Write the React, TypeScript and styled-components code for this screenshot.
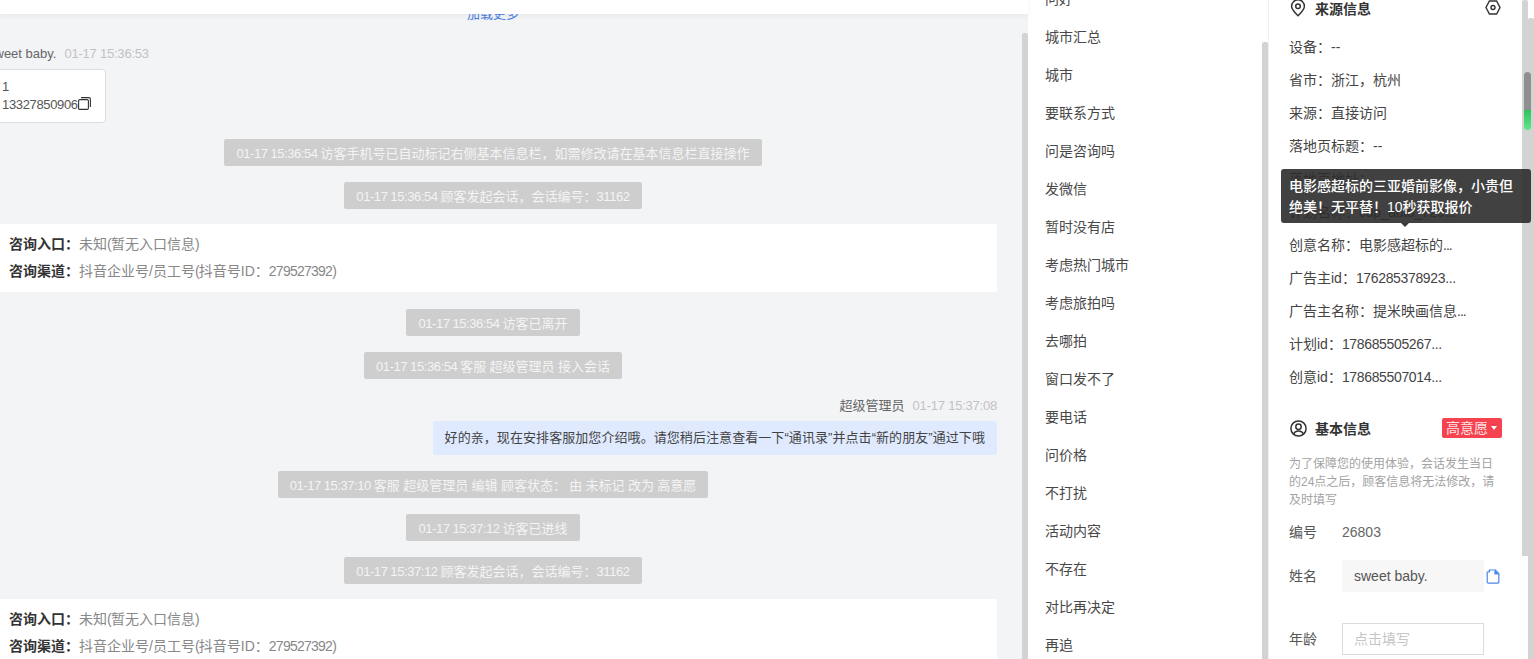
import React from "react";
import styled, { createGlobalStyle } from "styled-components";

const GlobalStyle = createGlobalStyle`
  html, body {
    margin: 0;
    padding: 0;
    background: #fff;
    overflow: hidden;
  }
  body {
    font-family: "Liberation Sans", "Noto Sans CJK SC", sans-serif;
    font-size: 14px;
    color: #444;
  }
`;

const Page = styled.div`
  position: relative;
  display: flex;
  width: 1534px;
  height: 659px;
  overflow: hidden;
  background: #fff;
`;

const ScrollThumb = styled.div<{ $top: number; $height?: number }>`
  flex: none;
  width: 6px;
  margin-top: ${(p) => p.$top}px;
  height: ${(p) => (p.$height ? `${p.$height}px` : "auto")};
  background: #d3d3d3;
  border-radius: 2px 2px 0 0;
`;

// latin runs in the reference are narrower than Liberation at the same size
const Tight = styled.span<{ $s: number }>`
  letter-spacing: ${(p) => p.$s}px;
`;

/* chat */
const ChatPane = styled.div`
  flex: none;
  width: 1028px;
  display: flex;
  flex-direction: column;
  background: #f3f4f6;
`;
const TopBar = styled.div`
  flex: none;
  height: 14px;
  background: #fff;
  box-shadow: 0 2px 6px rgba(0, 0, 0, 0.05);
  position: relative;
  z-index: 1;
`;
const ChatBody = styled.div`
  flex: 1;
  display: flex;
  min-height: 0;
`;
const ChatScroll = styled.div`
  flex: 1;
  overflow: hidden;
`;
const ChatContent = styled.div`
  width: 1008px;
  margin: -9px 0 0 -11px;
  display: flex;
  flex-direction: column;
  align-items: center;
`;
const LoadMore = styled.div`
  font-size: 13px;
  line-height: 18px;
  color: #4a7fe0;
  margin-bottom: 21px;
`;
const Incoming = styled.div`
  align-self: stretch;
  margin: 0 0 16px -1px;
`;
const Meta = styled.div<{ $right?: boolean }>`
  display: flex;
  gap: 8px;
  font-size: 13px;
  line-height: ${(p) => (p.$right ? 22 : 20)}px;
  color: #666;
  justify-content: ${(p) => (p.$right ? "flex-end" : "flex-start")};
`;
const Time = styled.span`
  color: #c2c2c2;
  letter-spacing: -0.22px;
`;
const ContactCard = styled.div`
  display: inline-block;
  margin: 5px 0 0 6px;
  padding: 8px 14px 8px 7px;
  background: #fff;
  border: 1px solid #dcdcdc;
  border-radius: 4px;
  font-size: 13px;
  line-height: 18px;
  color: #555;
`;
const CardPhone = styled.div`
  display: flex;
  align-items: center;
  letter-spacing: -0.35px;
`;
const CopySvg = styled.svg`
  margin-top: -3px;
`;
const SystemNote = styled.div`
  height: 27px;
  line-height: 29px;
  padding: 0 12px;
  margin-bottom: 16px;
  background: #cecece;
  border-radius: 2px;
  font-size: 13px;
  word-spacing: -0.25px;
  color: #f4f4f4;
  white-space: nowrap;
  overflow: hidden;
`;
const EntryCard = styled.div`
  align-self: stretch;
  box-sizing: border-box;
  height: 68px;
  margin: -1px 0 17px;
  padding: 7px 20px;
  background: #fff;
`;
const EntryRow = styled.div`
  line-height: 27px;
  white-space: nowrap;
  color: #888;
`;
const EntryLabel = styled.b`
  color: #333;
`;
const Outgoing = styled.div`
  align-self: stretch;
  display: flex;
  flex-direction: column;
  align-items: flex-end;
  gap: 4px;
  margin-bottom: 16px;
`;
const Bubble = styled.div`
  height: 34px;
  line-height: 34px;
  padding: 0 12px;
  background: #dfeaff;
  border-radius: 3px;
  font-size: 13px;
  letter-spacing: 0.07px;
  color: #444;
  white-space: nowrap;
`;

/* quick replies */
const ReplyPane = styled.div`
  flex: none;
  width: 240px;
  display: flex;
  background: #fff;
`;
const ReplyList = styled.div`
  flex: 1;
  overflow: hidden;
`;
const ReplyItem = styled.div`
  height: 38px;
  line-height: 38px;
  padding-left: 17px;
  color: #484848;
  &:first-child {
    margin-top: -20px;
  }
`;

/* info */
const InfoPane = styled.div`
  flex: none;
  width: 266px;
  display: flex;
  border-left: 1px solid #efefef;
  box-sizing: border-box;
`;
const InfoPanel = styled.div`
  flex: 1;
  min-width: 0;
  padding: 0 20px;
  overflow: hidden;
`;
const SectionHead = styled.div`
  display: flex;
  align-items: center;
  height: 20px;
  color: #333;
  font-weight: 700;
`;
const SourceHead = styled(SectionHead)`
  margin-top: -2px;
  margin-bottom: 13px;
`;
const BasicHead = styled(SectionHead)`
  margin-top: 24px;
`;
const HeadIcon = styled.span`
  display: flex;
  width: 18px;
  justify-content: center;
  margin-right: 8px;
  color: #333;
`;
const HeadTail = styled.span`
  margin-left: auto;
  display: flex;
`;
const SettingsSlot = styled(HeadTail)`
  margin-right: 1px;
  margin-top: -2px;
`;
const InfoRow = styled.div`
  height: 33px;
  line-height: 33px;
  color: #444;
  white-space: nowrap;
`;
const LevelTag = styled.span`
  display: flex;
  align-items: center;
  gap: 3px;
  height: 20px;
  padding: 0 5px 0 4px;
  background: #f5424f;
  border-radius: 2px;
  color: #fde3e3;
  font-weight: 400;
  line-height: 20px;
`;
const Caret = styled.i`
  width: 0;
  height: 0;
  border: 3px solid transparent;
  border-top: 4px solid #fff;
  border-bottom: 0;
`;
const Notice = styled.p`
  margin: 17px 0 13px;
  font-size: 12px;
  line-height: 18px;
  color: #a3a3a3;
`;
const Field = styled.div<{ $gap?: number }>`
  display: flex;
  align-items: center;
  line-height: 20px;
  margin-top: ${(p) => p.$gap ?? 0}px;
`;
const FieldLabel = styled.span`
  flex: none;
  width: 53px;
  color: #555;
`;
const FieldValue = styled.span`
  color: #666;
`;
const FilledInput = styled.div`
  box-sizing: border-box;
  flex: none;
  width: 142px;
  height: 32px;
  line-height: 32px;
  padding-left: 12px;
  background: #f7f7f7;
  color: #555;
`;
const EmptyInput = styled(FilledInput)`
  background: #fff;
  border: 1px solid #dcdcdc;
  line-height: 30px;
  padding-left: 11px;
  color: #c6c6c6;
`;
const CopySlot = styled.span`
  display: flex;
  margin-left: 2px;
  color: #4a86e8;
`;

/* overlays */
const MiniThumb = styled.div`
  position: absolute;
  left: 1524px;
  top: 72px;
  width: 7px;
  height: 58px;
  border-radius: 4px;
  background: linear-gradient(
    #8f8f8f 0,
    #8f8f8f 65%,
    #2fc25b 66%,
    #62e58c 100%
  );
`;
const Tooltip = styled.div`
  position: absolute;
  left: 1281px;
  top: 169px;
  box-sizing: border-box;
  width: 250px;
  height: 54px;
  padding: 7px 8px 0;
  border-radius: 3px;
  background: rgba(44, 44, 44, 0.9);
  color: #fff;
  font-weight: 500;
  line-height: 21px;
  &::after {
    content: "";
    position: absolute;
    left: 120px;
    bottom: -4px;
    border: 4px solid transparent;
    border-top: 4px solid #3a3a3a;
    border-bottom: 0;
  }
`;

const replies = [
  "问好",
  "城市汇总",
  "城市",
  "要联系方式",
  "问是咨询吗",
  "发微信",
  "暂时没有店",
  "考虑热门城市",
  "考虑旅拍吗",
  "去哪拍",
  "窗口发不了",
  "要电话",
  "问价格",
  "不打扰",
  "活动内容",
  "不存在",
  "对比再决定",
  "再追",
];

const sourceRows: { text: string; tail?: string; s?: number }[] = [
  { text: "设备：--" },
  { text: "省市：浙江，杭州" },
  { text: "来源：直接访问" },
  { text: "落地页标题：--" },
  { text: "落地页地址：" },
  { text: "计划名称：", tail: "cdp_auto_729...", s: -0.3 },
  { text: "创意名称：电影感超标的", tail: "...", s: -1 },
  { text: "广告主id：", tail: "176285378923...", s: -0.35 },
  { text: "广告主名称：提米映画信息", tail: "...", s: -1 },
  { text: "计划id：", tail: "178685505267...", s: -0.35 },
  { text: "创意id：", tail: "178685507014...", s: -0.35 },
];

function PinIcon() {
  return (
    <svg width="16" height="18" viewBox="0 0 16 18" fill="none" stroke="currentColor" strokeWidth="1.5">
      <path d="M8 16.8C5 13.8 1.6 10.6 1.6 7.2a6.4 6.4 0 0 1 12.8 0c0 3.4-3.4 6.6-6.4 9.6z" />
      <circle cx="8" cy="7.2" r="2.3" />
    </svg>
  );
}

function HexIcon() {
  return (
    <svg width="16" height="15" viewBox="0 0 16 15" fill="none" stroke="#333" strokeWidth="1.4">
      <path d="M4.4 1h7.2L15 7.5 11.6 14H4.4L1 7.5z" />
      <circle cx="8" cy="7.5" r="2" />
    </svg>
  );
}

function UserIcon() {
  return (
    <svg width="17" height="17" viewBox="0 0 17 17" fill="none" stroke="currentColor" strokeWidth="1.5">
      <circle cx="8.5" cy="8.5" r="7.6" />
      <circle cx="8.5" cy="6.8" r="2.7" />
      <path d="M3.6 14.2c.8-2.2 2.7-3.2 4.9-3.2s4.1 1 4.9 3.2" />
    </svg>
  );
}

function CopyIcon() {
  return (
    <CopySvg width="13" height="13" viewBox="0 0 13 13" fill="none" stroke="#333" strokeWidth="1.1">
      <rect x="0.6" y="2.6" width="9.8" height="9.8" rx="1.2" />
      <path d="M3 .6h8a1.4 1.4 0 0 1 1.4 1.4v8" />
    </CopySvg>
  );
}

function DocIcon() {
  return (
    <svg width="14" height="15" viewBox="0 0 14 15" fill="none" stroke="currentColor" strokeWidth="1.2">
      <path d="M1.2 3h2.2V1h6l3.4 3.4V13a1.2 1.2 0 0 1-1.2 1.2H2.4A1.2 1.2 0 0 1 1.2 13z" />
      <path d="M3.4 1v2M9 1.2v3.6h3.6" fill="currentColor" />
    </svg>
  );
}

function Stamp({ value }: { value: string }) {
  return <Tight $s={-0.43}>{value} </Tight>;
}

function EntryInfo() {
  return (
    <EntryCard>
      <EntryRow>
        <EntryLabel>咨询入口：</EntryLabel>未知<Tight $s={-0.75}>(</Tight>暂无入口信息<Tight $s={-0.75}>)</Tight>
      </EntryRow>
      <EntryRow>
        <EntryLabel>咨询渠道：</EntryLabel>抖音企业号/员工号<Tight $s={-0.75}>(</Tight>抖音号ID：
        <Tight $s={-0.75}>279527392)</Tight>
      </EntryRow>
    </EntryCard>
  );
}

export default function App() {
  return (
    <Page>
      <GlobalStyle />
      <ChatPane>
        <TopBar />
        <ChatBody>
          <ChatScroll>
            <ChatContent>
              <LoadMore>加载更多</LoadMore>
              <Incoming>
                <Meta>
                  <span>sweet baby.</span>
                  <Time>01-17 15:36:53</Time>
                </Meta>
                <ContactCard>
                  <div>1</div>
                  <CardPhone>
                    13327850906
                    <CopyIcon />
                  </CardPhone>
                </ContactCard>
              </Incoming>
              <SystemNote>
                <Stamp value="01-17 15:36:54" />
                访客手机号已自动标记右侧基本信息栏，如需修改请在基本信息栏直接操作
              </SystemNote>
              <SystemNote>
                <Stamp value="01-17 15:36:54" />
                顾客发起会话，会话编号：<Tight $s={-0.4}>31162</Tight>
              </SystemNote>
              <EntryInfo />
              <SystemNote>
                <Stamp value="01-17 15:36:54" />
                访客已离开
              </SystemNote>
              <SystemNote>
                <Stamp value="01-17 15:36:54" />
                客服 超级管理员 接入会话
              </SystemNote>
              <Outgoing>
                <Meta $right>
                  <span>超级管理员</span>
                  <Time>01-17 15:37:08</Time>
                </Meta>
                <Bubble>好的亲，现在安排客服加您介绍哦。请您稍后注意查看一下“通讯录”并点击“新的朋友”通过下哦</Bubble>
              </Outgoing>
              <SystemNote>
                <Stamp value="01-17 15:37:10" />
                客服 超级管理员 编辑 顾客状态： 由 未标记 改为 高意愿
              </SystemNote>
              <SystemNote>
                <Stamp value="01-17 15:37:12" />
                访客已进线
              </SystemNote>
              <SystemNote>
                <Stamp value="01-17 15:37:12" />
                顾客发起会话，会话编号：<Tight $s={-0.4}>31162</Tight>
              </SystemNote>
              <EntryInfo />
            </ChatContent>
          </ChatScroll>
          <ScrollThumb $top={19} />
        </ChatBody>
      </ChatPane>

      <ReplyPane>
        <ReplyList>
          {replies.map((r) => (
            <ReplyItem key={r}>{r}</ReplyItem>
          ))}
        </ReplyList>
        <ScrollThumb $top={42} />
      </ReplyPane>

      <InfoPane>
        <InfoPanel>
          <SourceHead>
            <HeadIcon>
              <PinIcon />
            </HeadIcon>
            来源信息
            <SettingsSlot>
              <HexIcon />
            </SettingsSlot>
          </SourceHead>
          {sourceRows.map((r) => (
            <InfoRow key={r.text + r.tail}>
              {r.text}
              {r.tail && <Tight $s={r.s ?? 0}>{r.tail}</Tight>}
            </InfoRow>
          ))}
          <BasicHead>
            <HeadIcon>
              <UserIcon />
            </HeadIcon>
            基本信息
            <HeadTail>
              <LevelTag>
                高意愿
                <Caret />
              </LevelTag>
            </HeadTail>
          </BasicHead>
          <Notice>为了保障您的使用体验，会话发生当日的24点之后，顾客信息将无法修改，请及时填写</Notice>
          <Field>
            <FieldLabel>编号</FieldLabel>
            <FieldValue>26803</FieldValue>
          </Field>
          <Field $gap={18}>
            <FieldLabel>姓名</FieldLabel>
            <FilledInput>sweet baby.</FilledInput>
            <CopySlot>
              <DocIcon />
            </CopySlot>
          </Field>
          <Field $gap={31}>
            <FieldLabel>年龄</FieldLabel>
            <EmptyInput>点击填写</EmptyInput>
          </Field>
        </InfoPanel>
        <ScrollThumb $top={0} $height={556} />
        <ScrollThumb $top={18} />
      </InfoPane>

      <MiniThumb />
      <Tooltip>电影感超标的三亚婚前影像，小贵但绝美！无平替！10秒获取报价</Tooltip>
    </Page>
  );
}
